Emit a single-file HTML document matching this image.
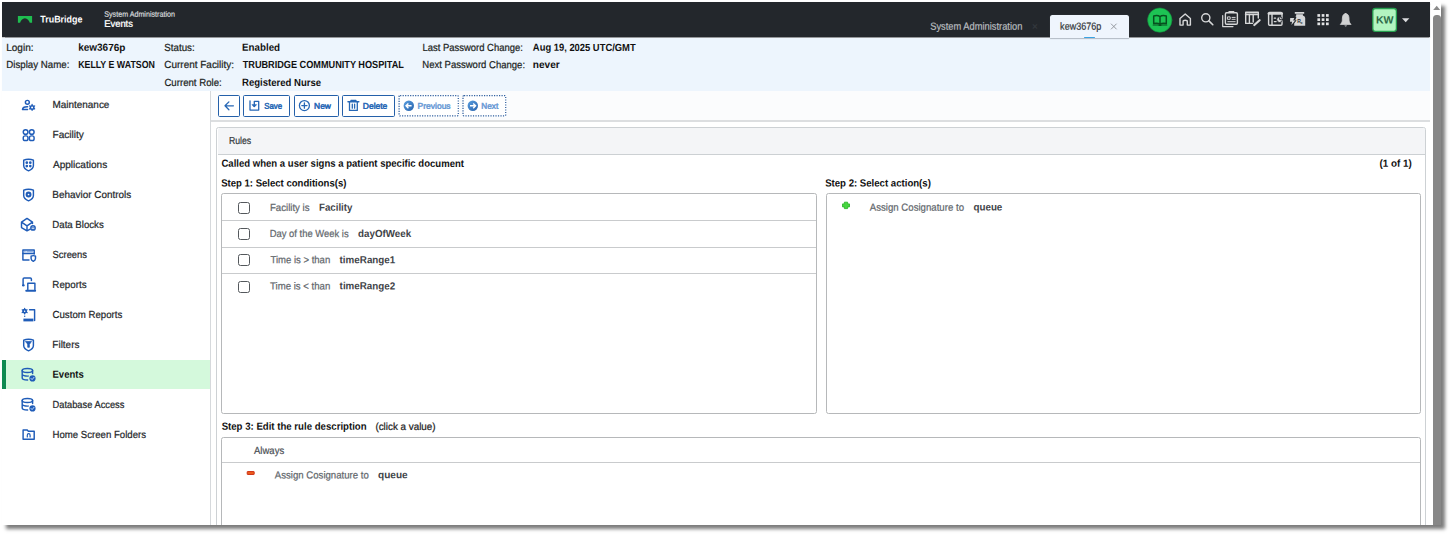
<!DOCTYPE html>
<html lang="en">
<head>
<meta charset="utf-8">
<title>System Administration - Events</title>
<style>
*{box-sizing:border-box;margin:0;padding:0}
html,body{width:1450px;height:536px;overflow:hidden;background:#fff}
body{font-family:"Liberation Sans",sans-serif;font-size:10px;color:#222;position:relative}
#frame{position:absolute;left:2px;top:2px;width:1438.6px;height:523.1px;background:#fff;box-shadow:4px 4px 3.5px #7c7c7c;overflow:hidden}
#pg{position:absolute;left:-2px;top:-2px;width:1450px;height:536px}
#pg div,#pg svg{position:absolute}
.x{position:absolute;left:0;top:0;white-space:nowrap;line-height:20px;height:20px;transform-origin:0 0}
.box{border:1px solid #b6b8ba;border-radius:2.5px;background:#fff}
.ln{height:1.1px;background:#c9cbcd}
.cb{width:12px;height:12px;border:1.3px solid #54585c;border-radius:2.5px;background:#fff}
.btn{top:94.6px;height:22.2px;border:1.9px solid #2460a9;border-radius:1.6px;background:#fff}
.btn.dot{border:0;background:#fff}
</style>
</head>
<body>
<div id="frame"><div id="pg">

<!-- header -->
<div style="left:2px;top:2px;width:1428px;height:35.4px;background:#23272c;box-shadow:0 .6px 1px rgba(20,25,30,.45)"></div>
<!-- info band -->
<div style="left:2px;top:37.5px;width:1428px;height:53.9px;background:#edf5fd"></div>
<!-- active tab -->
<div style="left:1050px;top:15.1px;width:78.8px;height:22.6px;background:#eff5fd;border-radius:2.5px 2.5px 0 0;box-shadow:0 0.5px 1px rgba(120,130,140,.5)"></div>
<div style="left:1083.6px;top:36.5px;width:11.2px;height:1.5px;background:#3aa3e3;border-radius:1px"></div>
<!-- sidebar -->
<div style="left:2px;top:91.4px;width:208.3px;height:440px;background:#fff"></div>
<div style="left:210.2px;top:91.4px;width:1px;height:440px;background:#d6d9dc"></div>
<div style="left:2px;top:359.8px;width:208.2px;height:29.7px;background:#d4f9dc"></div>
<div style="left:2px;top:359.8px;width:3.6px;height:29.7px;background:#0e8a50"></div>
<!-- toolbar -->
<div style="left:211.2px;top:91.4px;width:1218.8px;height:29.6px;background:#fbfcfd"></div>
<div style="left:211.2px;top:120.3px;width:1218.8px;height:1.7px;background:#dcdee0"></div>
<div class="btn" style="left:217.6px;width:22px"></div>
<div class="btn" style="left:243.1px;width:46.9px"></div>
<div class="btn" style="left:293.5px;width:45.3px"></div>
<div class="btn" style="left:342.2px;width:52.7px"></div>
<div class="btn dot" style="left:398.8px;width:60px"></div>
<div class="btn dot" style="left:462.4px;width:43.8px"></div>
<!-- rules panel -->
<div class="box" style="left:216.3px;top:127.3px;width:1209.7px;height:420px;border-color:#cdd1d4"></div>
<div style="left:217.6px;top:128.3px;width:1207.4px;height:25.4px;background:#f4f5f7;border-radius:2px 2px 0 0"></div>
<div class="ln" style="left:217.6px;top:153.6px;width:1207.4px;background:#ccd0d3"></div>
<!-- step boxes -->
<div class="box" style="left:221.2px;top:193.2px;width:596px;height:221px"></div>
<div class="box" style="left:826.2px;top:193.2px;width:595px;height:221px"></div>
<div class="box" style="left:221.2px;top:437.2px;width:1200px;height:110px"></div>
<div class="ln" style="left:222.2px;top:220.2px;width:594px"></div>
<div class="ln" style="left:222.2px;top:246.5px;width:594px"></div>
<div class="ln" style="left:222.2px;top:272.8px;width:594px"></div>
<div class="ln" style="left:222.2px;top:461.8px;width:1198px"></div>
<div class="cb" style="left:238px;top:201.6px"></div>
<div class="cb" style="left:238px;top:227.9px"></div>
<div class="cb" style="left:238px;top:254.1px"></div>
<div class="cb" style="left:238px;top:280.5px"></div>

<svg style="left:0;top:0" width="1450" height="536" viewBox="0 0 1450 536" fill="none">
<!-- logo -->
<path d="M17.9 15.9 H32.1 V22.8 H29.8 C29.3 20.4 27.2 18.7 24.9 18.2 C22.6 18.7 20.6 20.4 20.1 22.8 H17.9 Z" fill="#1fbe50"/>
<!-- header icons -->
<g stroke="#d6d7d8" stroke-width="1.4" stroke-linecap="round" stroke-linejoin="round">
 <circle cx="1159.8" cy="20.1" r="12.2" fill="#1dc354" stroke="#128a3a" stroke-width=".6"/>
 <g stroke="#07501f" stroke-width="1.5">
  <path d="M1160 16.6 C1158.6 15.5 1156 15.4 1153.7 15.9 V23.6 C1156 23.1 1158.6 23.3 1160 24.3 C1161.4 23.3 1164 23.1 1166.3 23.6 V15.9 C1164 15.4 1161.4 15.5 1160 16.6 Z M1160 16.6 V24.3"/>
  <path d="M1153.2 25 H1158.4 Q1160 26 1161.6 25 H1166.8" stroke-width="1.1"/>
 </g>
 <path d="M1180 18.6 L1185.2 14 L1190.4 18.6 V25.1 H1187.3 V21.4 Q1187.3 20.2 1185.2 20.2 Q1183.1 20.2 1183.1 21.4 V25.1 H1180 Z"/>
 <circle cx="1205.8" cy="17.8" r="4.1"/><path d="M1208.9 20.9 L1212.8 24.7" stroke-width="1.6"/>
 <!-- clipboard -->
 <path d="M1222.7 15.6 V26.6 H1233" stroke-width="1.2"/>
 <rect x="1225.4" y="12.7" width="12" height="11.6" rx="1.2"/>
 <path d="M1229 12.6 V11.6 H1233.8 V12.6" stroke-width="1.2"/>
 <rect x="1227.8" y="16.9" width="2.4" height="2.4" stroke-width="1"/>
 <path d="M1232 17.4 H1235.2 M1232 19.3 H1235.2 M1227.8 21.7 H1235.2" stroke-width="1"/>
 <!-- table edit -->
 <path d="M1258.3 18 V12.2 H1245.7 V23.4 H1252.5"/>
 <path d="M1245.7 14.3 H1258.3" stroke-width="1.8"/>
 <path d="M1249.4 14.5 V23.4 M1253.2 14.5 V22"/>
 <path d="M1259.6 20.2 L1254.3 25" stroke-width="2.2"/>
 <!-- window clock -->
 <rect x="1268.6" y="12.5" width="13.4" height="12.7" rx="1"/>
 <path d="M1268.6 13.6 H1282" stroke-width="2.2"/>
 <path d="M1272 13.6 V25.2"/>
 <path d="M1274.3 18.2 H1275.6 M1274.3 21.6 H1276.2" stroke-width="1.2"/>
 <circle cx="1279.6" cy="19.6" r="2.9" fill="#d6d7d8" stroke="#23272c" stroke-width=".9"/>
 <path d="M1279.6 17.7 V19.6 H1281.4" stroke="#23272c" stroke-width=".9"/>
 <!-- rx bottle -->
 <g stroke="none" fill="#d6d7d8">
  <rect x="1294.7" y="12" width="9.6" height="1.7" rx=".4"/>
  <path d="M1296.2 14.2 H1302.9 V15.4 Q1305.2 16 1305.2 18 V25.8 H1294.2 V23.5 L1296.6 20.2 H1295.2 L1296.4 17 Q1294.6 16.2 1296.2 15.4 Z"/>
  <path d="M1290.2 18 H1294.3 L1293.2 20.6 H1295.2 L1291.4 25 L1292.1 21.8 H1290 Z"/>
 </g>
 <!-- bell -->
 <path d="M1345.7 13.6 C1342.4 14 1342.4 17 1342.3 20.5 C1342.2 22.8 1341 23.6 1340.3 24.4 H1351.1 C1350.4 23.6 1349.2 22.8 1349.1 20.5 C1349 17 1349 14 1345.7 13.6 Z" fill="#d0d1d2" stroke="#d0d1d2" stroke-width=".8"/>
 <path d="M1344.3 25.6 Q1345.7 27.6 1347.1 25.6 Z" fill="#d0d1d2" stroke="none"/>
</g>
<!-- grid -->
<g fill="#e2e3e4">
 <rect x="1317.4" y="14.1" width="2.7" height="2.7"/><rect x="1321.7" y="14.1" width="2.7" height="2.7"/><rect x="1326" y="14.1" width="2.7" height="2.7"/>
 <rect x="1317.4" y="18.3" width="2.7" height="2.7"/><rect x="1321.7" y="18.3" width="2.7" height="2.7"/><rect x="1326" y="18.3" width="2.7" height="2.7"/>
 <rect x="1317.4" y="22.5" width="2.7" height="2.7"/><rect x="1321.7" y="22.5" width="2.7" height="2.7"/><rect x="1326" y="22.5" width="2.7" height="2.7"/>
</g>
<!-- avatar + caret -->
<rect x="1372.8" y="8.5" width="23.6" height="22.8" rx="2.6" fill="#b3f5c0" stroke="#27a04f" stroke-width="1.3"/>
<path d="M1402 18.3 H1409.4 L1405.7 22.2 Z" fill="#dcdddf"/>
<!-- tab close -->
<path d="M1111 23.7 L1116.6 29.3 M1116.6 23.7 L1111 29.3" stroke="#8b9096" stroke-width=".9"/>
<text x="1297.2" y="22.6" font-family="Liberation Sans, sans-serif" font-size="5" font-weight="bold" fill="#2a2e33">R<tspan dy="1.5" dx="-.3" font-size="3.6">x</tspan></text>
<!-- sidebar icons -->
<g stroke="#1f5cb8" stroke-width="1.45" stroke-linecap="round" stroke-linejoin="round">
 <!-- maintenance -->
 <circle cx="27.35" cy="102.3" r="1.95"/>
 <path d="M27.6 106.7 C24.6 106.6 22.6 107.6 22.5 109.5 H27.6"/>
 <circle cx="32.1" cy="107.4" r="1.75" stroke-width="1.5"/>
 <path d="M32.1 104.5 V105.2 M32.1 109.6 V110.3 M29.6 105.95 L30.2 106.3 M34 108.5 L34.6 108.85 M29.6 108.85 L30.2 108.5 M34 106.3 L34.6 105.95" stroke-width="1.3"/>
 <!-- facility -->
 <circle cx="25.6" cy="132" r="2.35"/><circle cx="31.75" cy="132" r="2.35"/>
 <rect x="23.25" y="135.85" width="4.7" height="4.7" rx="1.9"/><rect x="29.4" y="135.85" width="4.7" height="4.7" rx="1.9"/>
 <!-- applications shield -->
 <path id="shd" d="M28.55 159.2 C26.6 159.2 25 159.6 23.7 160.2 V165.5 C23.7 168.1 26 169.8 28.55 170.8 C31.1 169.8 33.4 168.1 33.4 165.5 V160.2 C32.1 159.6 30.5 159.2 28.55 159.2 Z"/>
 <g fill="#1f5cb8" stroke="none"><circle cx="26.8" cy="162.7" r="1.35"/><circle cx="30.3" cy="162.7" r="1.35"/><circle cx="26.8" cy="166.1" r="1.35"/><circle cx="30.3" cy="166.1" r="1.35"/></g>
 <!-- behavior controls -->
 <path d="M28.55 189.2 C26.6 189.2 25 189.6 23.7 190.2 V195.5 C23.7 198.1 26 199.8 28.55 200.8 C31.1 199.8 33.4 198.1 33.4 195.5 V190.2 C32.1 189.6 30.5 189.2 28.55 189.2 Z"/>
 <circle cx="28.55" cy="194.5" r="1.9" stroke-width="2.1"/>
 <!-- data blocks -->
 <path d="M30.2 229.2 L27 230.8 L21.5 227.6 V222.2 L27 218.4 L32.5 222.2 V223.6 M21.5 222.2 L27 225.8 L32.5 222.2 M27 225.8 V230.8"/>
 <circle cx="33" cy="227.9" r="2.9" fill="#1f5cb8" stroke="none"/>
 <path d="M32 228.6 H34 M32.2 227.2 A0.9 0.9 0 0 1 33.8 227.2" stroke="#fff" stroke-width=".8"/>
 <!-- screens -->
 <path d="M29 260 H22.9 V250 H34.2 V254"/>
 <path d="M22.9 253.5 H34.2"/>
 <path d="M24.6 251.75 H25.2 M27 251.75 H32.4" stroke-width="1.3" stroke="#8fb2e6"/>
 <path d="M33.3 255.6 C32.3 255.6 31.6 255.8 31.1 256.1 V258.6 C31.1 260 32.2 260.8 33.3 261.3 C34.4 260.8 35.5 260 35.5 258.6 V256.1 C35 255.8 34.3 255.6 33.3 255.6 Z"/>
 <!-- reports -->
 <path d="M23.1 284 V279 Q23.1 277.9 24.2 277.9 H30.3 Q31.4 277.9 31.4 279 V280.4"/>
 <circle cx="23.3" cy="285.3" r="1.3" fill="#1f5cb8" stroke="none"/>
 <path d="M27.8 289.6 V283.2 H34.9 V289.6"/>
 <path d="M26.2 290.7 H35.2" stroke-width="1.9"/>
 <!-- custom reports -->
 <circle cx="24.65" cy="311.2" r="1.6" stroke-width="1.7"/>
 <path d="M24.65 308.4 V309 M24.65 313.4 V314 M22.2 309.8 L22.8 310.15 M26.5 312.25 L27.1 312.6 M22.2 312.6 L22.8 312.25 M26.5 310.15 L27.1 309.8" stroke-width="1.2"/>
 <circle cx="24.7" cy="316.2" r=".7" fill="#1f5cb8" stroke="none"/>
 <path d="M29.6 309.8 H34.6 V320.6"/>
 <path d="M23.4 320 H33.4" stroke-width="2.8" stroke-linecap="butt"/>
 <!-- filters -->
 <path d="M28.55 339.2 C26.6 339.2 25 339.6 23.7 340.2 V345.5 C23.7 348.1 26 349.8 28.55 350.8 C31.1 349.8 33.4 348.1 33.4 345.5 V340.2 C32.1 339.6 30.5 339.2 28.55 339.2 Z"/>
 <path d="M25.6 341.5 H31.5 L29.4 344.4 V347.3 H27.7 V344.4 Z" fill="#1f5cb8" stroke-width=".7"/>
 <!-- events (db) -->
 <g>
 <ellipse cx="27.4" cy="370.4" rx="5.2" ry="2"/>
 <path d="M22.2 370.4 V378 C22.2 379.2 24.6 380 27.6 380 M32.6 370.4 V373.4 M22.2 374.2 C22.2 375.4 24.8 376.2 28.2 376.1"/>
 <circle cx="32.5" cy="378.4" r="3.1" fill="#1f5cb8" stroke="none"/>
 <path d="M31 378.4 L32.1 379.6 L34.1 377.2" stroke="#cfe3ff" stroke-width=".9"/>
 </g>
 <g transform="translate(0,30)">
 <ellipse cx="27.4" cy="370.4" rx="5.2" ry="2"/>
 <path d="M22.2 370.4 V378 C22.2 379.2 24.6 380 27.6 380 M32.6 370.4 V373.4 M22.2 374.2 C22.2 375.4 24.8 376.2 28.2 376.1"/>
 <circle cx="32.5" cy="378.4" r="3.1" fill="#1f5cb8" stroke="none"/>
 <path d="M31 378.4 L32.1 379.6 L34.1 377.2" stroke="#cfe3ff" stroke-width=".9"/>
 </g>
 <!-- folder -->
 <path d="M23.1 429.9 H27 L28.4 431.2 H34.2 V439.3 H23.1 Z"/>
 <path d="M27.3 436.9 V435.2 Q27.3 433.7 28.7 433.7 Q30.1 433.7 30.1 435.2 V436.9" stroke-width="1.2"/>
</g>
<!-- toolbar icons -->
<g stroke="#2667b5" stroke-width="1.3" stroke-linecap="round" stroke-linejoin="round">
 <path d="M233.4 105.8 H225.2 M228.9 101.9 L225 105.8 L228.9 109.7"/>
 <path d="M250 100.8 V110.1 H258.7 V101.3 H254.3 V106.6"/>
 <path d="M252.3 104.9 L254.3 107 L256.3 104.9 Z" fill="#2667b5" stroke-width=".8"/>
 <circle cx="304.4" cy="105.6" r="5"/><path d="M301.8 105.6 H307 M304.4 103 V108.2"/>
 <path d="M348 101.7 H358.8 M351 100.6 H355.9" stroke-width="1.5"/>
 <path d="M349.5 102 V110.4 H357.3 V102 M352.3 104.2 V108.2 M354.6 104.2 V108.2"/>
</g>
<defs><linearGradient id="cg" x1="0" y1="0" x2="1" y2="1"><stop offset="0" stop-color="#5a9fe0"/><stop offset="1" stop-color="#2862ac"/></linearGradient></defs><circle cx="408.8" cy="105.8" r="5.2" fill="url(#cg)"/><path d="M411.6 105.8 H406.3 M408.4 103.4 L406 105.8 L408.4 108.2" stroke="#fff" stroke-width="1.4"/>
<circle cx="472.8" cy="105.8" r="5.2" fill="url(#cg)"/><path d="M470 105.8 H475.3 M473.2 103.4 L475.6 105.8 L473.2 108.2" stroke="#fff" stroke-width="1.4"/>
<rect x="399.1" y="95.5" width="59.2" height="20.4" rx="1" stroke="#2f5f9f" stroke-width="1.25" stroke-dasharray="1.2 1.3"/>
<rect x="463" y="95.5" width="42.7" height="20.4" rx="1" stroke="#2f5f9f" stroke-width="1.25" stroke-dasharray="1.2 1.3"/>
<!-- plus / minus -->
<path d="M844.4 202.2 H847.6 V203.9 H849.5 V206.9 H847.6 V208.6 H844.4 V206.9 H842.5 V203.9 H844.4 Z" fill="#46d63f" stroke="#2eb82c" stroke-width=".9" stroke-linejoin="round"/>
<rect x="247.2" y="471.5" width="7" height="3" rx=".4" fill="#ea5a1c" stroke="#cc2a10" stroke-width=".9"/>
</svg>

<span class="x" id="h_tru" style="font-size:9.7px;color:#ffffff;font-weight:bold;transform:translate(40.26px,9.51px) scaleX(0.9216) rotate(0.03deg);">TruBridge</span>
<span class="x" id="h_sa" style="font-size:7.8px;color:#d4d7da;-webkit-text-stroke:0.22px #d4d7da;transform:translate(104.30px,4.67px) scaleX(0.9154) rotate(0.03deg);">System Administration</span>
<span class="x" id="h_ev" style="font-size:9.4px;color:#ffffff;-webkit-text-stroke:0.28px #ffffff;transform:translate(104.17px,13.82px) scaleX(1.0041) rotate(0.03deg);">Events</span>
<span class="x" id="tab1" style="font-size:10.4px;color:#b7bbbf;-webkit-text-stroke:0.22px #b7bbbf;transform:translate(930.25px,16.81px) scaleX(0.8957) rotate(0.03deg);">System Administration</span>
<span class="x" id="tab1x" style="font-size:10px;color:#353a3f;-webkit-text-stroke:0.22px #353a3f;transform:translate(1032.00px,16.81px) scaleX(1.0000) rotate(0.03deg);">×</span>
<span class="x" id="tab2" style="font-size:10.4px;color:#33373b;-webkit-text-stroke:0.22px #33373b;transform:translate(1060.13px,16.81px) scaleX(0.8676) rotate(0.03deg);">kew3676p</span>
<span class="x" id="kw" style="font-size:10.6px;color:#2e6a47;font-weight:bold;transform:translate(1375.90px,9.54px) scaleX(1.0000) rotate(0.03deg);">KW</span>
<span class="x" id="i_login" style="font-size:10.3px;color:#1c1f22;-webkit-text-stroke:0.22px #1c1f22;transform:translate(6.24px,37.99px) scaleX(0.9726) rotate(0.03deg);">Login:</span>
<span class="x" id="i_loginv" style="font-size:10.3px;color:#111;font-weight:bold;transform:translate(78.14px,37.86px) scaleX(0.9706) rotate(0.03deg);">kew3676p</span>
<span class="x" id="i_status" style="font-size:10.3px;color:#1c1f22;-webkit-text-stroke:0.22px #1c1f22;transform:translate(164.32px,37.99px) scaleX(0.9457) rotate(0.03deg);">Status:</span>
<span class="x" id="i_statusv" style="font-size:10.3px;color:#111;font-weight:bold;transform:translate(242.12px,37.86px) scaleX(0.9469) rotate(0.03deg);">Enabled</span>
<span class="x" id="i_lpc" style="font-size:10.3px;color:#1c1f22;-webkit-text-stroke:0.22px #1c1f22;transform:translate(422.47px,37.99px) scaleX(0.9178) rotate(0.03deg);">Last Password Change:</span>
<span class="x" id="i_lpcv" style="font-size:10.3px;color:#111;font-weight:bold;transform:translate(532.88px,37.86px) scaleX(0.9115) rotate(0.03deg);">Aug 19, 2025 UTC/GMT</span>
<span class="x" id="i_dn" style="font-size:10.3px;color:#1c1f22;-webkit-text-stroke:0.22px #1c1f22;transform:translate(6.30px,55.09px) scaleX(0.9422) rotate(0.03deg);">Display Name:</span>
<span class="x" id="i_dnv" style="font-size:10.3px;color:#111;font-weight:bold;transform:translate(78.14px,54.96px) scaleX(0.8564) rotate(0.03deg);">KELLY E WATSON</span>
<span class="x" id="i_cf" style="font-size:10.3px;color:#1c1f22;-webkit-text-stroke:0.22px #1c1f22;transform:translate(164.33px,55.09px) scaleX(0.9667) rotate(0.03deg);">Current Facility:</span>
<span class="x" id="i_cfv" style="font-size:10.3px;color:#111;font-weight:bold;transform:translate(242.69px,54.96px) scaleX(0.8883) rotate(0.03deg);">TRUBRIDGE COMMUNITY HOSPITAL</span>
<span class="x" id="i_npc" style="font-size:10.3px;color:#1c1f22;-webkit-text-stroke:0.22px #1c1f22;transform:translate(422.34px,55.09px) scaleX(0.9251) rotate(0.03deg);">Next Password Change:</span>
<span class="x" id="i_npcv" style="font-size:10.3px;color:#111;font-weight:bold;transform:translate(532.78px,54.96px) scaleX(0.9809) rotate(0.03deg);">never</span>
<span class="x" id="i_cr" style="font-size:10.3px;color:#1c1f22;-webkit-text-stroke:0.22px #1c1f22;transform:translate(164.41px,72.99px) scaleX(0.9363) rotate(0.03deg);">Current Role:</span>
<span class="x" id="i_crv" style="font-size:10.3px;color:#111;font-weight:bold;transform:translate(242.07px,72.86px) scaleX(0.9276) rotate(0.03deg);">Registered Nurse</span>
<span class="x" id="n0" style="font-size:10.25px;color:#25282b;-webkit-text-stroke:0.22px #25282b;transform:translate(52.44px,94.98px) scaleX(0.9707) rotate(0.03deg);">Maintenance</span>
<span class="x" id="n1" style="font-size:10.25px;color:#25282b;-webkit-text-stroke:0.22px #25282b;transform:translate(52.56px,124.98px) scaleX(0.9832) rotate(0.03deg);">Facility</span>
<span class="x" id="n2" style="font-size:10.25px;color:#25282b;-webkit-text-stroke:0.22px #25282b;transform:translate(52.93px,154.98px) scaleX(0.9829) rotate(0.03deg);">Applications</span>
<span class="x" id="n3" style="font-size:10.25px;color:#25282b;-webkit-text-stroke:0.22px #25282b;transform:translate(52.37px,184.98px) scaleX(0.9685) rotate(0.03deg);">Behavior Controls</span>
<span class="x" id="n4" style="font-size:10.25px;color:#25282b;-webkit-text-stroke:0.22px #25282b;transform:translate(52.38px,214.98px) scaleX(0.9383) rotate(0.03deg);">Data Blocks</span>
<span class="x" id="n5" style="font-size:10.25px;color:#25282b;-webkit-text-stroke:0.22px #25282b;transform:translate(52.55px,244.98px) scaleX(0.9168) rotate(0.03deg);">Screens</span>
<span class="x" id="n6" style="font-size:10.25px;color:#25282b;-webkit-text-stroke:0.22px #25282b;transform:translate(52.36px,274.98px) scaleX(0.9527) rotate(0.03deg);">Reports</span>
<span class="x" id="n7" style="font-size:10.25px;color:#25282b;-webkit-text-stroke:0.22px #25282b;transform:translate(52.55px,304.98px) scaleX(0.9410) rotate(0.03deg);">Custom Reports</span>
<span class="x" id="n8" style="font-size:10.25px;color:#25282b;-webkit-text-stroke:0.22px #25282b;transform:translate(52.34px,334.98px) scaleX(0.9720) rotate(0.03deg);">Filters</span>
<span class="x" id="n9" style="font-size:10.25px;color:#111;font-weight:bold;transform:translate(52.48px,364.86px) scaleX(0.9317) rotate(0.03deg);">Events</span>
<span class="x" id="n10" style="font-size:10.25px;color:#25282b;-webkit-text-stroke:0.22px #25282b;transform:translate(52.54px,394.98px) scaleX(0.9076) rotate(0.03deg);">Database Access</span>
<span class="x" id="n11" style="font-size:10.25px;color:#25282b;-webkit-text-stroke:0.22px #25282b;transform:translate(52.47px,424.98px) scaleX(0.9387) rotate(0.03deg);">Home Screen Folders</span>
<span class="x" id="b_save" style="font-size:8.2px;color:#2667b5;-webkit-text-stroke:0.5px #2667b5;transform:translate(264.25px,96.76px) scaleX(0.9594) rotate(0.03deg);">Save</span>
<span class="x" id="b_new" style="font-size:8.2px;color:#2667b5;-webkit-text-stroke:0.5px #2667b5;transform:translate(314.12px,96.76px) scaleX(1.0245) rotate(0.03deg);">New</span>
<span class="x" id="b_del" style="font-size:8.2px;color:#2667b5;-webkit-text-stroke:0.5px #2667b5;transform:translate(362.81px,96.76px) scaleX(1.0348) rotate(0.03deg);">Delete</span>
<span class="x" id="b_prev" style="font-size:8.2px;color:#6c9cd6;-webkit-text-stroke:0.5px #6c9cd6;transform:translate(417.62px,96.76px) scaleX(1.0357) rotate(0.03deg);">Previous</span>
<span class="x" id="b_next" style="font-size:8.2px;color:#6c9cd6;-webkit-text-stroke:0.5px #6c9cd6;transform:translate(481.38px,96.76px) scaleX(0.9984) rotate(0.03deg);">Next</span>
<span class="x" id="m_rules" style="font-size:10.2px;color:#33373b;-webkit-text-stroke:0.22px #33373b;transform:translate(228.96px,130.88px) scaleX(0.8519) rotate(0.03deg);">Rules</span>
<span class="x" id="m_called" style="font-size:10.3px;color:#111;font-weight:bold;transform:translate(221.48px,153.76px) scaleX(0.9273) rotate(0.03deg);">Called when a user signs a patient specific document</span>
<span class="x" id="m_1of1" style="font-size:10.3px;color:#111;font-weight:bold;transform:translate(1379.41px,153.76px) scaleX(0.9582) rotate(0.03deg);">(1 of 1)</span>
<span class="x" id="m_s1" style="font-size:10.3px;color:#111;font-weight:bold;transform:translate(221.18px,173.46px) scaleX(0.9273) rotate(0.03deg);">Step 1: Select conditions(s)</span>
<span class="x" id="m_s2" style="font-size:10.3px;color:#111;font-weight:bold;transform:translate(825.14px,173.46px) scaleX(0.9332) rotate(0.03deg);">Step 2: Select action(s)</span>
<span class="x" id="r1a" style="font-size:10.3px;color:#62676c;-webkit-text-stroke:0.22px #62676c;transform:translate(269.91px,197.99px) scaleX(0.9375) rotate(0.03deg);">Facility is</span>
<span class="x" id="r1b" style="font-size:10.3px;color:#3f4449;font-weight:bold;transform:translate(318.97px,197.86px) scaleX(0.9428) rotate(0.03deg);">Facility</span>
<span class="x" id="r2a" style="font-size:10.3px;color:#62676c;-webkit-text-stroke:0.22px #62676c;transform:translate(269.74px,224.09px) scaleX(0.9155) rotate(0.03deg);">Day of the Week is</span>
<span class="x" id="r2b" style="font-size:10.3px;color:#3f4449;font-weight:bold;transform:translate(358.08px,223.96px) scaleX(0.9492) rotate(0.03deg);">dayOfWeek</span>
<span class="x" id="r3a" style="font-size:10.3px;color:#62676c;-webkit-text-stroke:0.22px #62676c;transform:translate(270.42px,250.29px) scaleX(0.9264) rotate(0.03deg);">Time is &gt; than</span>
<span class="x" id="r3b" style="font-size:10.3px;color:#3f4449;font-weight:bold;transform:translate(339.61px,250.16px) scaleX(0.9535) rotate(0.03deg);">timeRange1</span>
<span class="x" id="r4a" style="font-size:10.3px;color:#62676c;-webkit-text-stroke:0.22px #62676c;transform:translate(269.99px,276.49px) scaleX(0.9331) rotate(0.03deg);">Time is &lt; than</span>
<span class="x" id="r4b" style="font-size:10.3px;color:#3f4449;font-weight:bold;transform:translate(339.62px,276.36px) scaleX(0.9512) rotate(0.03deg);">timeRange2</span>
<span class="x" id="a1a" style="font-size:10.3px;color:#62676c;-webkit-text-stroke:0.22px #62676c;transform:translate(869.75px,197.69px) scaleX(0.9357) rotate(0.03deg);">Assign Cosignature to</span>
<span class="x" id="a1b" style="font-size:10.3px;color:#3f4449;font-weight:bold;transform:translate(973.46px,197.56px) scaleX(0.9520) rotate(0.03deg);">queue</span>
<span class="x" id="m_s3" style="font-size:10.3px;color:#111;font-weight:bold;transform:translate(221.64px,416.76px) scaleX(0.9348) rotate(0.03deg);">Step 3: Edit the rule description</span>
<span class="x" id="m_s3b" style="font-size:10.3px;color:#222;-webkit-text-stroke:0.22px #222;transform:translate(375.41px,416.89px) scaleX(0.9556) rotate(0.03deg);">(click a value)</span>
<span class="x" id="d_always" style="font-size:10.3px;color:#4d5257;-webkit-text-stroke:0.22px #4d5257;transform:translate(254.04px,440.89px) scaleX(0.9227) rotate(0.03deg);">Always</span>
<span class="x" id="d1a" style="font-size:10.3px;color:#62676c;-webkit-text-stroke:0.22px #62676c;transform:translate(274.79px,465.49px) scaleX(0.9334) rotate(0.03deg);">Assign Cosignature to</span>
<span class="x" id="d1b" style="font-size:10.3px;color:#3f4449;font-weight:bold;transform:translate(378.08px,465.36px) scaleX(0.9773) rotate(0.03deg);">queue</span>
<!-- scrollbar -->
<div style="left:1433px;top:15px;width:8px;height:520px;background:#878787;border-radius:3.5px 3.5px 0 0"></div>
<svg style="left:1430px;top:0" width="12" height="14" viewBox="0 0 12 14"><path d="M3.2 9.9 L6.7 5.8 L10.2 9.9 Z" fill="#8a8a8a"/></svg>
</div></div>
</body>
</html>
